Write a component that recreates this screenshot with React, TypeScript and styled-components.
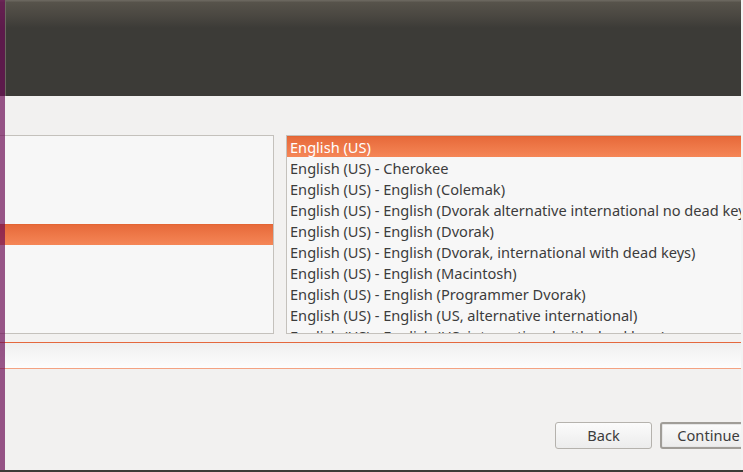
import styled, { createGlobalStyle } from 'styled-components';

const GlobalStyle = createGlobalStyle`
	html, body {
		margin: 0;
		padding: 0;
		background: #f2f1f0;
		overflow: hidden;
	}
	* {
		box-sizing: border-box;
	}
`;

const layouts = [
	'English (US)',
	'English (US) - Cherokee',
	'English (US) - English (Colemak)',
	'English (US) - English (Dvorak alternative international no dead keys)',
	'English (US) - English (Dvorak)',
	'English (US) - English (Dvorak, international with dead keys)',
	'English (US) - English (Macintosh)',
	'English (US) - English (Programmer Dvorak)',
	'English (US) - English (US, alternative international)',
	'English (US) - English (US, international with dead keys)',
];

const Screen = styled.div`
	position: relative;
	width: 743px;
	height: 472px;
	display: flex;
	flex-direction: column;
	font-family: 'Noto Sans', 'DejaVu Sans', sans-serif;
	color: #3c3c3c;
`;

const Desk = styled.div`
	flex: 1;
	display: flex;
	min-height: 0;
`;

const Window = styled.div`
	width: 741px;
	display: flex;
	flex-direction: column;
	overflow: hidden;
	background: #f2f1f0;
`;

const EdgeGap = styled.div`
	flex: 1;
	background: #f3f3f3;
`;

const Taskbar = styled.div`
	height: 2px;
	background: #3c3b37;
`;

const Header = styled.div`
	height: 96px;
	flex-shrink: 0;
	background:
		linear-gradient(to right, transparent 5px, #6b675f 5px, #6b675f 6px, transparent 6px),
		linear-gradient(#6a665e 0, #6a665e 1px, #57534b 2px, #4a4741 16px, #3c3b37 28px);
`;

const Body = styled.div`
	flex: 1;
	display: flex;
	flex-direction: column;
	padding-top: 39px;
`;

const Lists = styled.div`
	display: flex;
	gap: 12px;
	height: 199px;
`;

const ListBox = styled.div<{ $wide?: boolean }>`
	display: flex;
	flex-direction: column;
	background: #f7f7f7;
	border: 1px solid #c4c1bc;
	border-left: ${(p) => (p.$wide ? '1px solid #c4c1bc' : 'none')};
	border-right: ${(p) => (p.$wide ? 'none' : '1px solid #c4c1bc')};
	padding-top: ${(p) => (p.$wide ? 0 : 88)}px;
	overflow: hidden;
	${(p) => (p.$wide ? 'flex: 1;' : 'width: 274px;')}
`;

const Row = styled.div<{ $selected?: boolean }>`
	flex-shrink: 0;
	height: 21px;
	line-height: 22px;
	padding-left: 3px;
	font-size: 14.6px;
	white-space: nowrap;
	overflow: hidden;
	color: ${(p) => (p.$selected ? '#ffffff' : '#3c3c3c')};
	background: ${(p) =>
		p.$selected ? 'linear-gradient(#df5f2c 0, #e76a3a 1px, #f58657 100%)' : 'transparent'};
`;

const Entry = styled.div`
	margin-top: 8px;
	height: 27px;
	border-top: 1px solid #e4683e;
	border-bottom: 1px solid #f4a282;
	background: linear-gradient(#efefef, #fdfdfd);
`;

const ButtonRow = styled.div`
	display: flex;
	gap: 8px;
	margin-top: 53px;
	padding-left: 555px;
`;

const Button = styled.div<{ $default?: boolean }>`
	flex-shrink: 0;
	width: 97px;
	height: 27px;
	display: flex;
	align-items: center;
	justify-content: center;
	padding-bottom: 2px;
	font-size: 14.6px;
	border-radius: 3px;
	border: ${(p) => (p.$default ? '2px solid #a09d98' : '1px solid #b5b2ad')};
	background: linear-gradient(#fbfbfb, #ececec);
	box-shadow: ${(p) => (p.$default ? 'inset 0 0 0 1px #e6e6e6' : 'none')};
	color: #3c3c3c;
`;

const Launcher = styled.div`
	position: absolute;
	left: 0;
	top: 0;
	bottom: 2px;
	width: 5px;
	background: rgba(107, 11, 84, 0.69);
`;

export default function App() {
	return (
		<Screen>
			<GlobalStyle />
			<Desk>
				<Window>
					<Header />
					<Body>
						<Lists>
							<ListBox>
								<Row $selected />
							</ListBox>
							<ListBox $wide>
								{layouts.map((name, i) => (
									<Row key={name} $selected={i === 0}>
										{name}
									</Row>
								))}
							</ListBox>
						</Lists>
						<Entry />
						<ButtonRow>
							<Button>Back</Button>
							<Button $default>Continue</Button>
						</ButtonRow>
					</Body>
				</Window>
				<EdgeGap />
			</Desk>
			<Taskbar />
			<Launcher />
		</Screen>
	);
}
